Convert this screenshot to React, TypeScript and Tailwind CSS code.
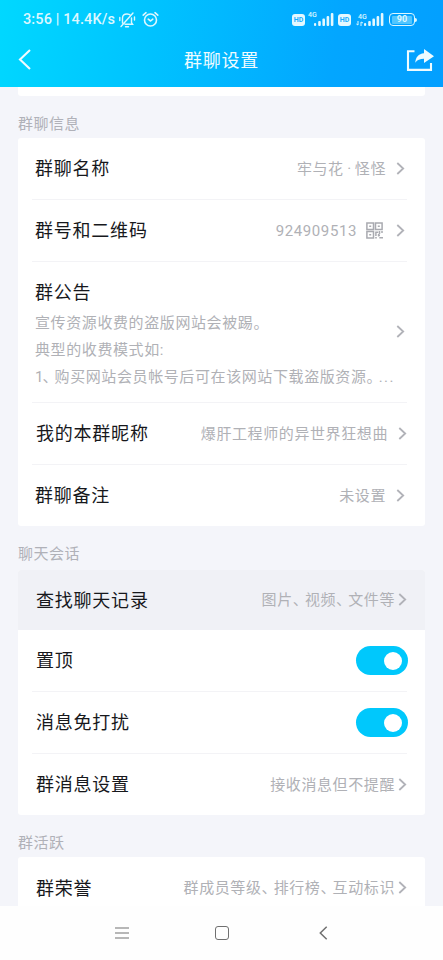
import type { ReactNode } from "react";

const Chevron = ({ className = "" }: { className?: string }) => (
  <svg className={`shrink-0 ${className}`} width="9" height="14" viewBox="0 0 9 14" fill="none" stroke="#b1b2b8" strokeWidth="1.8">
    <path d="M1.300 1 7.200 6.500l-5.900 5.500" />
  </svg>
);

/** Renders text with full-width punctuation pulled in to a narrower advance. */
const Tight = ({ text }: { text: string }) => (
  <>
    {text.split(/([、。])/).map((part, i) =>
      part === "、" || part === "。" ? (
        <span key={i} className="tracking-[-2.9px]">{part}</span>
      ) : (
        part
      ),
    )}
  </>
);

const Label = ({ children }: { children: ReactNode }) => (
  <span className="whitespace-nowrap pt-px text-[18px] leading-6 tracking-[0.78px] text-[#17181c]">{children}</span>
);

const Value = ({ text }: { text: string }) => (
  <span className="whitespace-nowrap text-[15px] leading-6 tracking-[0.6px] text-[#b0b1b6]">
    <Tight text={text} />
  </span>
);

const Divider = () => <div className="ml-[14px] mr-[18px] h-px shrink-0 bg-[#f3f3f6]" />;

const Heading = ({ children }: { children: ReactNode }) => (
  <div className="pl-[18px] text-[15px] leading-6 tracking-[0.5px] text-[#b0b1b8]">{children}</div>
);

const Toggle = () => (
  <div className="flex h-[29px] w-[52px] items-center justify-end rounded-full bg-[#00c8fc] pr-[6px]">
    <div className="size-[18px] rounded-full bg-white" />
  </div>
);

const QrIcon = () => (
  <svg width="17" height="17" viewBox="0 0 17 17" fill="none" stroke="#a9aab0" strokeWidth="1.5">
    <path d="M.9.9h6.600v6.600H.9zM9.500.9h6.600v6.600H9.500zM.9 9.500h6.600v6.600H.9z" />
    <path d="M3.200 4.200h2M11.800 4.200h2M3.200 12.800h2M9.200 10.200h3M9.900 10v4M13.500 9v3M16 9v2M9.200 15.800h1.600M12 13.200h2M13.300 15.800H17M12.600 12v2.600" />
  </svg>
);

const Bars = () => (
  <svg width="20" height="13" viewBox="0 0 20 13" fill="#e4f8ff">
    <rect x="0" y="10" width="2.2" height="3" rx="1" />
    <rect x="4.2" y="8" width="2.6" height="5" rx="1" />
    <rect x="8.4" y="5.5" width="2.6" height="7.5" rx="1" />
    <rect x="12.6" y="3" width="2.6" height="10" rx="1" />
    <rect x="16.8" y="0" width="2.6" height="13" rx="1" />
  </svg>
);

const Hd = () => (
  <span className="flex h-3 w-[13px] items-center justify-center rounded-[3px] bg-[#e4f8ff] pt-px text-[7px] font-bold leading-none text-[#16adff]">HD</span>
);

const StatusBar = () => (
  <div className="flex h-[39px] items-center pl-[23px] pr-[26px] text-[#dcf7ff]">
    <span className="w-[93px] whitespace-nowrap pt-px text-[14.5px] font-medium leading-5 tracking-[0.12px]">3:56 | 14.4K/s</span>
    <svg className="ml-[2px]" width="18" height="18" viewBox="0 0 18 18" fill="none" stroke="currentColor" strokeWidth="1.4" strokeLinecap="round">
      <path d="M4.5 12V7.2C4.5 4.5 6.3 3 9 3c1.5 0 2.8.5 3.6 1.500M13.500 7v4.600l1.100 1.700H7M7.500 15.800h3M15 2 3 15.500M1.800 6.500v3M16.500 6v3" />
    </svg>
    <svg className="ml-[6px]" width="17" height="17" viewBox="0 0 17 17" fill="none" stroke="currentColor" strokeWidth="1.6" strokeLinecap="round" strokeLinejoin="round">
      <circle cx="8.5" cy="9" r="6" />
      <path d="M6.2 8.2 8.6 10l2.2-1.800M1.200 4.200 4 1.700M15.800 4.200 13 1.700" />
    </svg>
    <div className="ml-auto flex items-center">
      <Hd />
      <span className="-mt-[9px] ml-[3px] w-[9px] text-[7px] font-medium leading-none">4G</span>
      <div className="-ml-[3px]"><Bars /></div>
      <div className="ml-[4px]"><Hd /></div>
      <div className="ml-[5px] flex w-[10px] flex-col">
        <span className="pl-[2px] text-[7px] font-medium leading-[8px]">4G</span>
        <svg width="8" height="5" viewBox="0 0 8 5" fill="none" stroke="currentColor"><path d="M2 0v4L.4 3M5 5V1l2 1" /></svg>
      </div>
      <div className="-ml-[2px]"><Bars /></div>
      <div className="ml-[5px] flex h-[13px] w-[26px] items-center justify-center rounded-[4px] border-[1.5px] border-[#dcf7ff]">
        <span className="flex h-2 w-5 items-center justify-center rounded-[1px] bg-[#51c6ff] text-[9px] font-bold leading-none">90</span>
      </div>
      <div className="h-[4px] w-[2px] rounded-r bg-[#dcf7ff]" />
    </div>
  </div>
);

const TitleBar = () => (
  <div className="grid h-12 grid-cols-[100px_1fr_100px] items-center text-[#effbff]">
    <svg className="-mt-[7px] ml-[18px]" width="13" height="21" viewBox="0 0 13 21" fill="none" stroke="currentColor" strokeWidth="2.1">
      <path d="M12 1 2 10.500 12 20" />
    </svg>
    <span className="-mt-[4px] text-center text-[18px] leading-6 tracking-[0.78px]">群聊设置</span>
    <svg className="-mt-[5px] ml-auto mr-[9px]" width="28" height="23" viewBox="0 0 28 23" fill="none">
      <path d="M8.5 2.2H2v18.700h23V14" stroke="currentColor" strokeWidth="2.1" />
      <path d="M18 0 28 7.2 18 14v-4.200c-4 0-6.800 1-8.700 4C9.400 8.400 12.500 4.700 18 4.200Z" fill="currentColor" />
    </svg>
  </div>
);

export default function App() {
  return (
    <div className="flex h-[960px] w-[443px] flex-col overflow-hidden bg-[#f4f5fa] font-[Roboto,'Noto_Sans_CJK_SC',sans-serif]">
      <header className="h-[87px] shrink-0 bg-[linear-gradient(100deg,#00d8ff_0%,#00c2ff_35%,#03a6ff_75%,#039fff_100%)]">
        <StatusBar />
        <TitleBar />
      </header>

      <main className="flex h-[819px] shrink-0 flex-col overflow-hidden">
        <div className="mx-[18px] h-[9px] shrink-0 rounded-b-[3px] bg-white" />

        <div className="flex h-[42px] shrink-0 flex-col justify-end pb-[2px]"><Heading>群聊信息</Heading></div>
        <section className="mx-[18px] flex h-[388px] w-[407px] shrink-0 flex-col rounded-[3px] bg-white">
          <div className="flex h-[61px] items-center justify-between pl-[17px] pr-[20px]">
            <Label>群聊名称</Label>
            <div className="flex items-center gap-[10px]">
              <span className="whitespace-nowrap text-[15px] leading-6 tracking-[0.6px] text-[#b0b1b6]">
                牢与花<span className="tracking-[-0.1px]"> · </span>怪怪
              </span>
              <Chevron />
            </div>
          </div>
          <Divider />
          <div className="flex h-[61px] items-center justify-between pl-[17px] pr-[20px]">
            <Label>群号和二维码</Label>
            <div className="flex items-center">
              <Value text="924909513" />
              <div className="ml-[9px] mr-[13px] -mt-px"><QrIcon /></div>
              <Chevron />
            </div>
          </div>
          <Divider />
          <div className="flex h-[140px] items-center justify-between pl-[17px] pr-[20px]">
            <div className="flex h-full w-[360px] shrink-0 flex-col pt-[18px]">
              <Label>群公告</Label>
              <div className="mt-[5px] whitespace-nowrap text-[15px] leading-[27px] tracking-[0.6px] text-[#b0b1b6]">
                <p><Tight text="宣传资源收费的盗版网站会被踢。" /></p>
                <p>典型的收费模式如:</p>
                <p><span className="tracking-[-1px]">1</span><Tight text="、购买网站会员帐号后可在该网站下载盗版资源。" /><span className="tracking-[1.4px]">...</span></p>
              </div>
            </div>
            <Chevron />
          </div>
          <Divider />
          <div className="flex h-[61px] items-center justify-between pl-[18px] pr-[18px]">
            <Label>我的本群昵称</Label>
            <div className="flex items-center gap-[10px]"><Value text="爆肝工程师的异世界狂想曲" /><Chevron /></div>
          </div>
          <Divider />
          <div className="flex h-[61px] items-center justify-between pl-[17px] pr-[20px]">
            <Label>群聊备注</Label>
            <div className="flex items-center gap-[10px]"><Value text="未设置" /><Chevron /></div>
          </div>
        </section>

        <div className="flex h-[44px] shrink-0 flex-col justify-end pb-[4px]"><Heading>聊天会话</Heading></div>
        <section className="mx-[18px] flex h-[245px] w-[407px] shrink-0 flex-col rounded-[3px] bg-white">
          <div className="flex h-[60px] items-center justify-between rounded-t-[3px] bg-[#f0f1f6] pl-[18px] pr-[18px]">
            <Label>查找聊天记录</Label>
            <div className="flex items-center gap-[3px]"><Value text="图片、视频、文件等" /><Chevron /></div>
          </div>
          <div className="flex h-[61px] items-center justify-between pl-[18px] pr-[17px]"><Label>置顶</Label><Toggle /></div>
          <Divider />
          <div className="flex h-[61px] items-center justify-between pl-[18px] pr-[17px]"><Label>消息免打扰</Label><Toggle /></div>
          <Divider />
          <div className="flex h-[61px] items-center justify-between pl-[18px] pr-[18px]">
            <Label>群消息设置</Label>
            <div className="flex items-center gap-[3px]"><Value text="接收消息但不提醒" /><Chevron /></div>
          </div>
        </section>

        <div className="flex h-[42px] shrink-0 flex-col justify-end pb-[2px]"><Heading>群活跃</Heading></div>
        <section className="mx-[18px] flex h-[62px] w-[407px] shrink-0 items-center justify-between rounded-[3px] bg-white pl-[18px] pr-[18px]">
          <Label>群荣誉</Label>
          <div className="flex items-center gap-[3px]"><Value text="群成员等级、排行榜、互动标识" /><Chevron /></div>
        </section>
      </main>

      <nav className="flex h-[54px] shrink-0 items-center bg-[#fefefe] pl-[115px]">
        <svg width="14" height="12" viewBox="0 0 14 12" stroke="#707070" strokeWidth="1.2"><path d="M0 1h14M0 6h14M0 11h14" /></svg>
        <div className="ml-[86px] size-[14px] rounded-[3px] border-[1.5px] border-[#707070]" />
        <svg className="ml-[90px]" width="9" height="14" viewBox="0 0 9 14" fill="none" stroke="#707070" strokeWidth="1.5"><path d="M7.700 .8 1.300 7l6.400 6.200" /></svg>
      </nav>
    </div>
  );
}
